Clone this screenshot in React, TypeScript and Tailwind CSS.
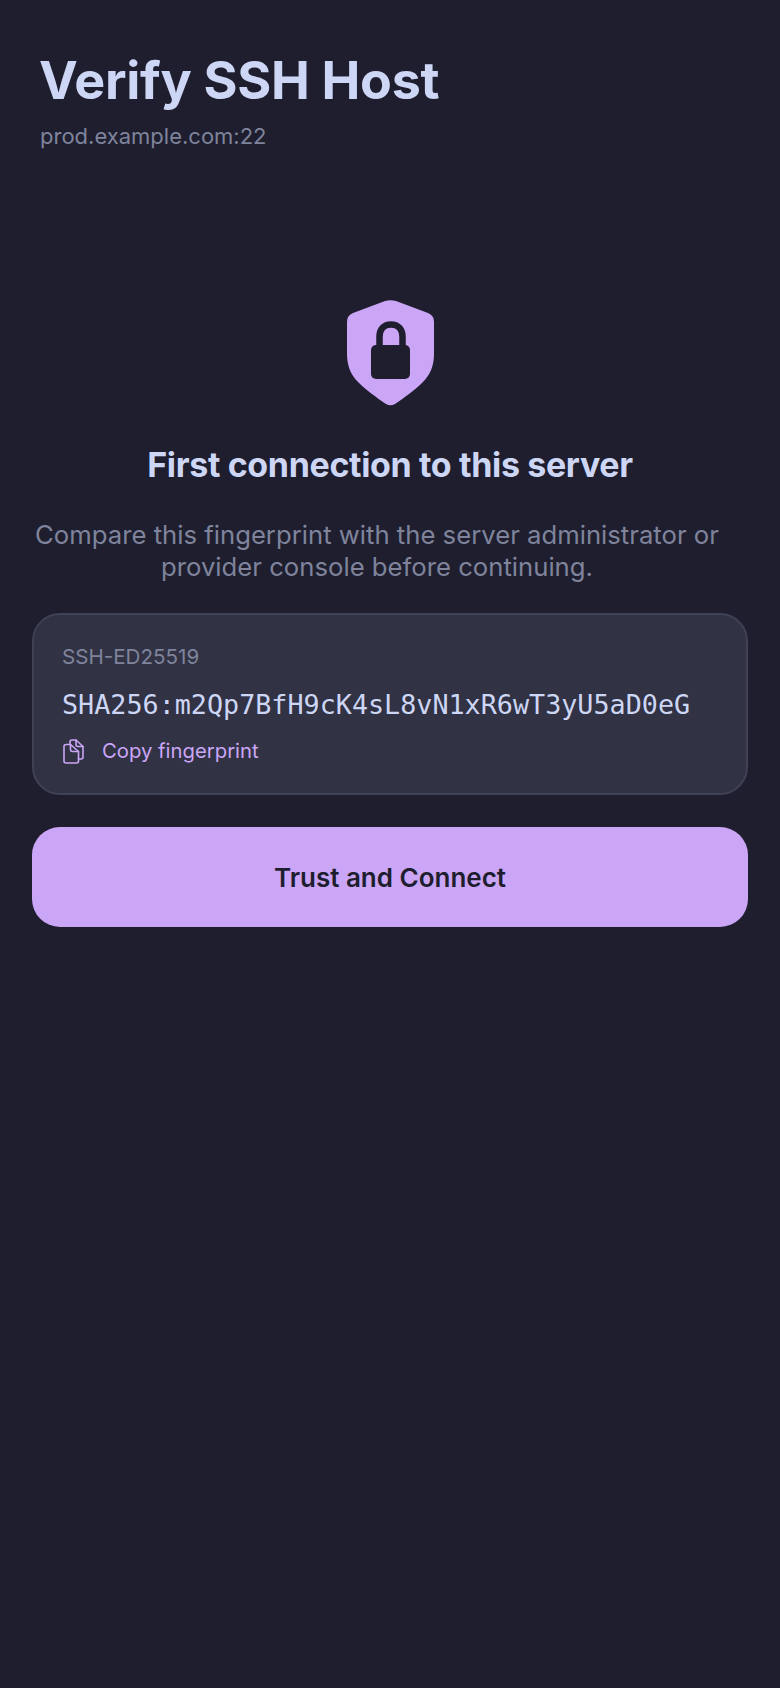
const ShieldLock = () => (
  <svg width="87" height="106" viewBox="0 0 87 106" className="text-[#cba6f7]">
    <path
      d="M38 1 Q43.5 -0.6 49 1 L81 13 Q87 15.5 87 22 V54 C87 66 83 75 76 82 C67 91 58 97 48 104 Q43.5 106.5 39 104 C29 97 20 91 11 82 C4 75 0 66 0 54 V22 Q0 15.5 6 13 Z"
      fill="currentColor"
    />
    <path d="M32.5 50 V37 C32.5 29 37 24.5 44 24.5 C51 24.5 55.5 29 55.5 37 V50" fill="none" stroke="#1e1e2e" strokeWidth="6.5" />
    <rect x="24" y="45" width="39" height="34" rx="5" fill="#1e1e2e" />
  </svg>
);

const CopyIcon = () => (
  <svg width="21" height="25" viewBox="0 0 21 25" fill="none" stroke="#cba6f7" strokeWidth="1.6" strokeLinejoin="round" strokeLinecap="round">
    <path d="M7 5.5 V3 Q7 1 9 1 H13 L20 7.5 V18 Q20 20 18 20 H15.5" />
    <path d="M13 1 V5.5 Q13 7.5 15 7.5 H20" />
    <path d="M1 7.5 Q1 5.5 3 5.5 H7.5 L15.5 12.5 V22 Q15.5 24 13.5 24 H3 Q1 24 1 22 Z" />
    <path d="M7.5 5.5 V10.5 Q7.5 12.5 9.5 12.5 H15.5" />
  </svg>
);

export default function App() {
  return (
    <div className="min-h-[1688px] bg-[#1e1e2e] font-['Inter',sans-serif] text-[#cdd6f4]">
      <header className="px-10 pt-[47px]">
        <h1 className="-ml-[1px] text-[52px] leading-[68px] font-bold tracking-[-0.3px]">Verify SSH Host</h1>
        <p className="mt-[6px] text-[22px] leading-[30px] text-[#7f849c]">prod.example.com:22</p>
      </header>

      <main className="flex flex-col items-center px-8 pt-[149px]">
        <ShieldLock />
        <h2 className="mt-[36px] text-[34px] leading-[46px] font-bold tracking-[-0.35px]">First connection to this server</h2>
        <p className="mt-[31px] pr-[26px] text-center text-[25.7px] leading-[31.5px] text-[#7f849c]">
          Compare this fingerprint with the server administrator or
          <br />
          provider console before continuing.
        </p>

        <section className="mt-[31px] w-full rounded-[28px] border-2 border-[#3f4154] bg-[#313244] px-[28px] pt-[28px] pb-[27px]">
          <div className="text-[20.6px] leading-[28px] text-[#7f849c]">SSH-ED25519</div>
          <div className="mt-[16px] font-['DejaVu_Sans_Mono',monospace] text-[26.75px] leading-[36px] whitespace-nowrap">
            SHA256:m2Qp7BfH9cK4sL8vN1xR6wT3yU5aD0eG
          </div>
          <button className="mt-[13px] flex items-center gap-[18px] pl-[1px] text-[20.3px] leading-[30px] text-[#cba6f7]">
            <CopyIcon />
            Copy fingerprint
          </button>
        </section>

        <button className="mt-[32px] h-[100px] w-full rounded-[28px] bg-[#cba6f7] text-[26px] font-semibold text-[#1e1e2e]">
          Trust and Connect
        </button>
      </main>
    </div>
  );
}
